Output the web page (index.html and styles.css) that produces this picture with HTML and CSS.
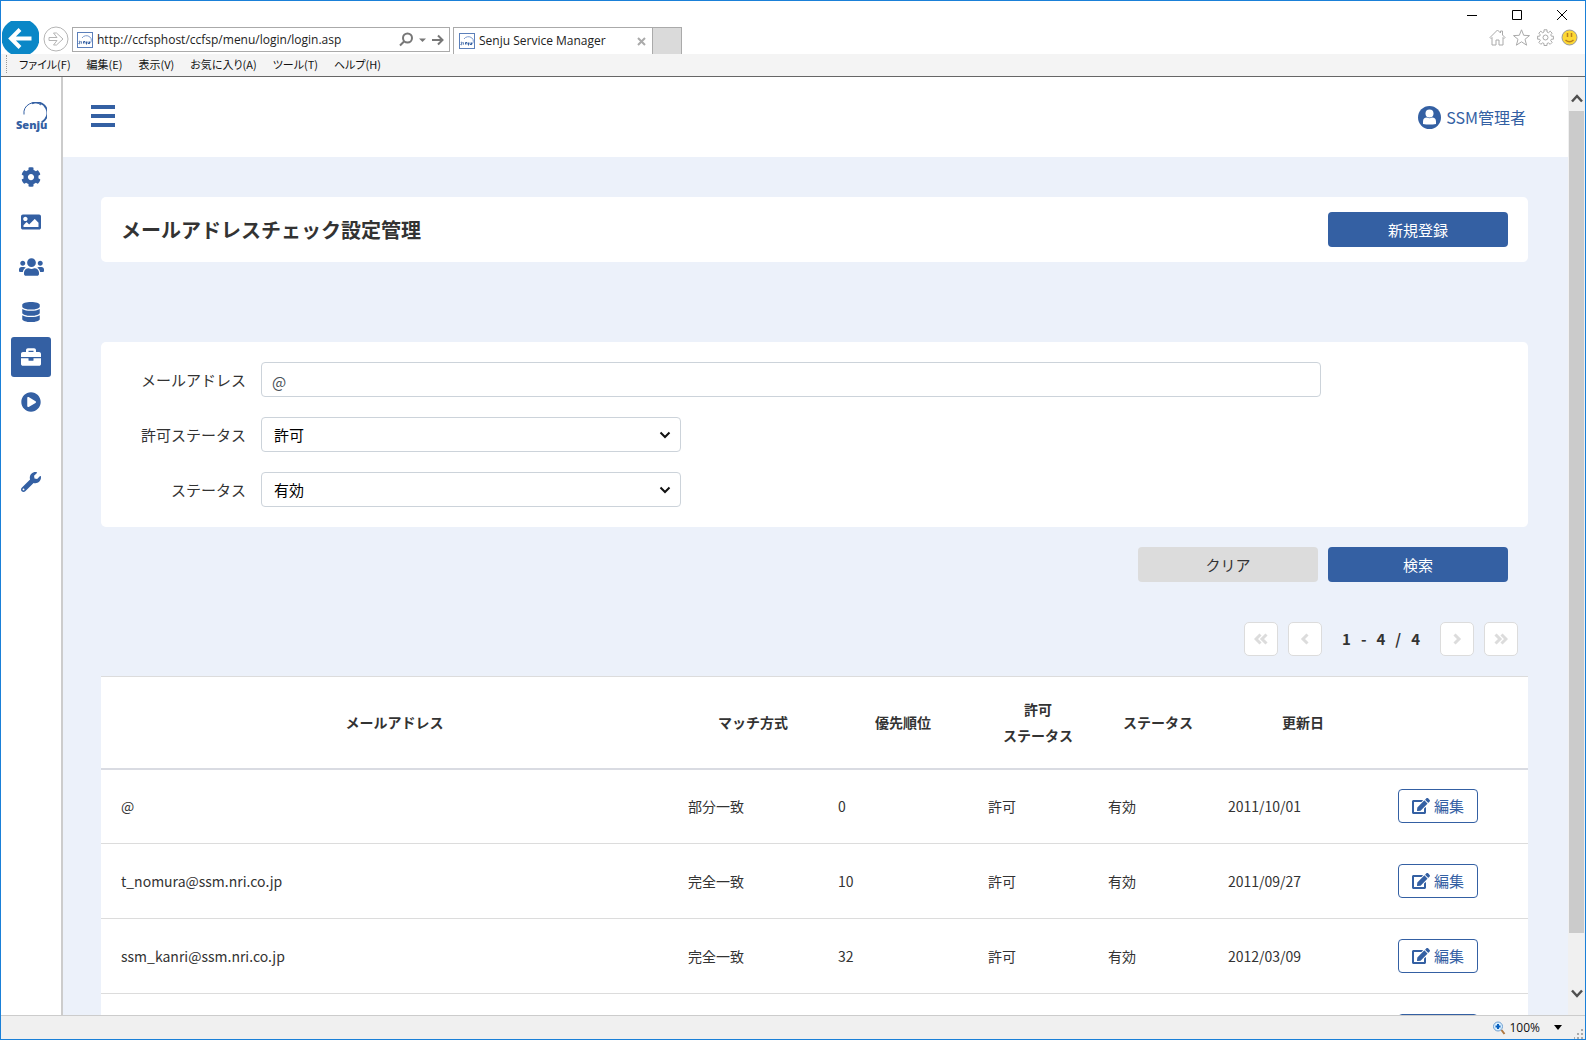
FILE: index.html
```html
<!DOCTYPE html>
<html lang="ja">
<head>
<meta charset="utf-8">
<title>Senju Service Manager</title>
<link rel="stylesheet" href="styles.css">
</head>
<body>
<svg class="sprite" aria-hidden="true">
  <symbol id="edit" viewBox="0 0 576 512"><path d="M402.6 83.2l90.2 90.2c3.8 3.8 3.8 10 0 13.8L274.4 405.6l-92.8 10.3c-12.4 1.4-22.9-9.1-21.5-21.5l10.3-92.8L388.8 83.2c3.8-3.8 10-3.8 13.8 0zm162-22.9l-48.8-48.8c-15.2-15.2-39.9-15.2-55.2 0l-35.4 35.4c-3.8 3.8-3.8 10 0 13.8l90.2 90.2c3.8 3.8 10 3.8 13.8 0l35.4-35.4c15.2-15.3 15.2-40 0-55.2zM384 346.2V448H64V128h229.8c3.2 0 6.2-1.3 8.5-3.5l40-40c7.6-7.6 2.2-20.5-8.5-20.5H48C21.5 64 0 85.5 0 112v352c0 26.5 21.5 48 48 48h352c26.5 0 48-21.5 48-48V306.2c0-10.7-12.9-16-20.5-8.5l-40 40c-2.2 2.3-3.5 5.3-3.5 8.5z"/></symbol>
  <symbol id="down" viewBox="0 0 12 8"><path d="M1.5 1.5L6 6l4.500-4.500" fill="none" stroke="currentColor" stroke-width="2"/></symbol>
  <symbol id="favicon" viewBox="0 0 16 16"><rect x=".5" y=".5" width="15" height="15" fill="#fff" stroke="#5b7fba"/><path d="M5 6a5 4.500 0 1 1 7 6" fill="none" stroke="#7d9bce"/><path d="M1.500 11.500c1 .8 2-.2 1-1s0-1.800 1-1M5 11.500c-1 0-1-2 0-2M6.500 11.500v-2h1.500v2M9.500 9.500v3M11 9.500v2h1.500v-2" fill="none" stroke="#3460a3"/></symbol>
</svg>

<div class="window">
  <header class="chrome">
    <div class="navigation">
      <button class="bare" aria-label="戻る"><svg width="37" height="34" viewBox="0 0 37 34"><path d="M9 1a19 19 0 0 0 0 33h19a19 19 0 0 0 0-33z" fill="#0a87c7"/><path d="M9.500 18.500h20M18 9.500l-9 9 9 9" fill="none" stroke="#fff" stroke-width="4"/></svg></button>
      <button class="bare" aria-label="進む"><svg width="26" height="26" viewBox="0 0 26 26" fill="none" stroke="#b5b5b5"><circle cx="13" cy="13" r="12"/><path d="M6 11.500h8l-3.500-4.500h3l6.500 6-6.500 6h-3l3.500-4.500H6z"/></svg></button>
      <div class="address">
        <svg width="16" height="16"><use href="#favicon"/></svg>
        <input class="url" aria-label="アドレス" value="http://ccfsphost/ccfsp/menu/login/login.asp">
        <svg width="46" height="16" viewBox="0 0 46 16" fill="none" stroke="#777" stroke-width="2"><circle cx="8.500" cy="6" r="4.500"/><path d="M5 9.500l-4 4M33 8h10M39 3.500L43.500 8 39 12.500"/><path d="M20 6.500h7l-3.500 3.500z" fill="#777" stroke="none"/></svg>
      </div>
      <div class="tab">
        <svg width="16" height="16"><use href="#favicon"/></svg>
        <span class="tab-name">Senju Service Manager</span>
        <button class="bare" aria-label="タブを閉じる"><svg width="9" height="9" viewBox="0 0 9 9"><path d="M1 1l7 7M8 1L1 8" stroke="#aaa" stroke-width="2"/></svg></button>
      </div>
      <button class="new-tab" aria-label="新しいタブ"></button>
      <div class="corner">
        <div class="controls">
          <svg width="12" height="12" viewBox="0 0 12 12"><path d="M1 6.500h10" stroke="#000"/></svg>
          <svg width="12" height="12" viewBox="0 0 12 12"><path d="M1.500 1.500h9v9h-9z" fill="none" stroke="#000"/></svg>
          <svg width="12" height="12" viewBox="0 0 12 12"><path d="M1 1l10 10M11 1L1 11" stroke="#000"/></svg>
        </div>
        <div class="tools">
          <svg width="17" height="17" viewBox="0 0 17 17" fill="none" stroke="#aaa"><path d="M1 8.500l7.500-7.500 3 3V2h2v4L16 8.500l-1 1-1-1V16h-4v-5H7v5H3V8.500l-1 1z"/></svg>
          <svg width="17" height="17" viewBox="0 0 17 17" fill="none" stroke="#aaa"><path d="M8.500.8l2.200 5.500 5.800.3-4.500 3.700 1.600 5.900-5.100-3.400-5.100 3.400L5 10.300.5 6.600l5.800-.3z"/></svg>
          <svg width="17" height="17" viewBox="0 0 17 17" fill="none" stroke="#aaa"><circle cx="8.500" cy="8.500" r="2.500"/><path d="M7 .8h3v2.200l1.500.7 1.700-1.500 2 2-1.500 1.700.7 1.300h2v3h-2l-.7 1.500 1.500 1.600-2 2-1.700-1.400-1.500.6v2H7v-2l-1.500-.6-1.700 1.400-2-2 1.500-1.600-.7-1.500h-2v-3h2l.7-1.300-1.500-1.700 2-2 1.700 1.500L7 3z"/></svg>
          <svg width="17" height="17" viewBox="0 0 17 17"><circle cx="8.500" cy="8.500" r="7.500" fill="#fdd835" stroke="#999"/><path d="M6.500 4v4M10.500 4v4M4.500 11q4 3.500 8 0" fill="none" stroke="#b8801c" stroke-width="1.500"/></svg>
        </div>
      </div>
    </div>
    <nav class="menubar">
      <span class="handle"></span>
      <span>ファイル(F)</span><span>編集(E)</span><span>表示(V)</span><span>お気に入り(A)</span><span>ツール(T)</span><span>ヘルプ(H)</span>
    </nav>
  </header>

  <div class="viewport">
    <nav class="sidebar">
      <div class="logo">
        <svg width="24" height="24" viewBox="0 0 24 24" aria-hidden="true"><path d="M1 12.500A10.500 10.500 0 0 1 18 3" fill="none" stroke="#3460a3"/><path d="M9 1.500A10.500 10.500 0 0 1 18.500 20.500" fill="none" stroke="#3460a3" stroke-width="1.800"/></svg>
        <span class="logo-name">Senju</span>
      </div>
      <a class="item" href="#" aria-label="設定"><svg width="20" height="20" viewBox="0 0 512 512"><path d="M487.400 315.700l-42.600-24.600c4.300-23.200 4.300-47 0-70.200l42.600-24.600c4.900-2.800 7.100-8.600 5.500-14-11.100-35.600-30-67.800-54.700-94.600-3.800-4.100-10-5.100-14.800-2.300L380.800 110c-17.900-15.400-38.500-27.300-60.800-35.100V25.800c0-5.600-3.900-10.500-9.400-11.700-36.700-8.200-74.300-7.800-109.200 0-5.500 1.200-9.400 6.100-9.400 11.700V75c-22.200 7.900-42.800 19.800-60.800 35.100L88.700 85.500c-4.900-2.800-11-1.900-14.800 2.300-24.700 26.700-43.600 58.900-54.700 94.600-1.700 5.400.6 11.200 5.500 14L67.300 221c-4.300 23.200-4.300 47 0 70.200l-42.600 24.600c-4.900 2.800-7.100 8.600-5.500 14 11.100 35.600 30 67.800 54.700 94.600 3.800 4.100 10 5.100 14.800 2.300l42.600-24.600c17.900 15.400 38.500 27.300 60.800 35.100v49.200c0 5.600 3.900 10.500 9.400 11.700 36.700 8.200 74.300 7.800 109.200 0 5.500-1.200 9.400-6.100 9.400-11.700v-49.200c22.200-7.900 42.800-19.800 60.800-35.100l42.600 24.600c4.900 2.800 11 1.900 14.800-2.300 24.700-26.700 43.600-58.900 54.700-94.600 1.500-5.500-.7-11.300-5.600-14.100zM256 336c-44.100 0-80-35.900-80-80s35.900-80 80-80 80 35.900 80 80-35.900 80-80 80z"/></svg></a>
      <a class="item" href="#" aria-label="画像"><svg width="20" height="20" viewBox="0 0 512 512"><path d="M464 448H48c-26.510 0-48-21.490-48-48V112c0-26.510 21.490-48 48-48h416c26.510 0 48 21.490 48 48v288c0 26.510-21.490 48-48 48zM112 120c-30.928 0-56 25.072-56 56s25.072 56 56 56 56-25.072 56-56-25.072-56-56-56zM64 384h384V272l-87.515-87.515c-4.686-4.686-12.284-4.686-16.971 0L208 320l-55.515-55.515c-4.686-4.686-12.284-4.686-16.971 0L64 336v48z"/></svg></a>
      <a class="item" href="#" aria-label="ユーザー"><svg width="25" height="20" viewBox="0 0 640 512"><path d="M96 224c35.300 0 64-28.700 64-64s-28.700-64-64-64-64 28.700-64 64 28.700 64 64 64zm448 0c35.300 0 64-28.700 64-64s-28.700-64-64-64-64 28.700-64 64 28.700 64 64 64zm32 32h-64c-17.600 0-33.500 7.100-45.100 18.600 40.300 22.100 68.900 62 75.100 109.400h66c17.700 0 32-14.300 32-32v-32c0-35.300-28.700-64-64-64zm-256 0c61.900 0 112-50.100 112-112S381.900 32 320 32 208 82.100 208 144s50.100 112 112 112zm76.800 32h-8.300c-20.800 10-43.900 16-68.500 16s-47.600-6-68.500-16h-8.300C179.600 288 128 339.600 128 403.200V432c0 26.500 21.500 48 48 48h288c26.500 0 48-21.500 48-48v-28.800c0-63.600-51.600-115.200-115.200-115.200zm-223.700-13.400C161.500 263.100 145.600 256 128 256H64c-35.300 0-64 28.700-64 64v32c0 17.700 14.300 32 32 32h65.900c6.300-47.400 34.900-87.300 75.200-109.400z"/></svg></a>
      <a class="item" href="#" aria-label="データベース"><svg width="18" height="20" viewBox="0 0 448 512"><path d="M448 73.143v45.714C448 159.143 347.667 192 224 192S0 159.143 0 118.857V73.143C0 32.857 100.333 0 224 0s224 32.857 224 73.143zM448 176v102.857C448 319.143 347.667 352 224 352S0 319.143 0 278.857V176c48.125 33.143 136.208 48.572 224 48.572S399.874 209.143 448 176zm0 160v102.857C448 479.143 347.667 512 224 512S0 479.143 0 438.857V336c48.125 33.143 136.208 48.572 224 48.572S399.874 369.143 448 336z"/></svg></a>
      <a class="item active" href="#" aria-label="業務"><svg width="20" height="20" viewBox="0 0 512 512"><path d="M320 336c0 8.840-7.160 16-16 16h-96c-8.840 0-16-7.160-16-16v-48H0v144c0 25.600 22.400 48 48 48h416c25.600 0 48-22.400 48-48V288H320v48zm144-208h-80V80c0-25.600-22.400-48-48-48H176c-25.600 0-48 22.400-48 48v48H48c-25.600 0-48 22.400-48 48v80h512v-80c0-25.600-22.400-48-48-48zm-144 0H192V96h128v32z"/></svg></a>
      <a class="item" href="#" aria-label="実行"><svg width="20" height="20" viewBox="0 0 512 512"><path d="M256 8C119 8 8 119 8 256s111 248 248 248 248-111 248-248S393 8 256 8zm115.700 272l-176 101c-15.800 8.800-35.700-2.500-35.700-21V152c0-18.400 19.800-29.800 35.700-21l176 107c16.400 9.200 16.400 32.900 0 42z"/></svg></a>
      <a class="item apart" href="#" aria-label="ツール"><svg width="20" height="20" viewBox="0 0 512 512"><path d="M507.730 109.100c-2.240-9.030-13.540-12.090-20.120-5.510l-74.360 74.360-67.880-11.310-11.310-67.880 74.360-74.360c6.620-6.620 3.430-17.900-5.660-20.160-47.380-11.740-99.550.91-136.580 37.930-39.640 39.640-50.550 97.100-34.050 147.200L18.740 402.760c-24.990 24.990-24.990 65.510 0 90.500 24.990 24.990 65.510 24.990 90.500 0l213.210-213.210c50.120 16.710 107.470 5.680 147.370-34.220 37.070-37.070 49.700-89.320 37.910-136.730zM64 472c-13.250 0-24-10.750-24-24 0-13.260 10.750-24 24-24s24 10.740 24 24c0 13.250-10.750 24-24 24z"/></svg></a>
    </nav>

    <div class="page">
      <header class="topbar">
        <button class="bare" aria-label="メニュー"><svg width="24" height="22" viewBox="0 0 24 22"><path d="M0 2h24M0 11h24M0 20h24" stroke="#3460a3" stroke-width="4"/></svg></button>
        <a class="user" href="#"><svg width="23" height="23" viewBox="0 0 23 23"><circle cx="11.500" cy="11.500" r="11.500"/><circle cx="11.500" cy="7.500" r="4" fill="#fff"/><path d="M5 18v-2.500q0-4 4-4 2.500 1.500 5 0 4 0 4 4V18q-6.500 1-13 0z" fill="#fff"/></svg>SSM管理者</a>
      </header>
      <main class="content">
        <section class="card heading">
          <h1 class="title">メールアドレスチェック設定管理</h1>
          <button class="button primary">新規登録</button>
        </section>
        <form class="search">
          <div class="card fields">
            <label for="mail">メールアドレス</label>
            <input class="control" id="mail" value="@">
            <label for="permit">許可ステータス</label>
            <div class="picker"><select class="control" id="permit"><option>許可</option></select><svg width="12" height="8"><use href="#down"/></svg></div>
            <label for="status">ステータス</label>
            <div class="picker"><select class="control" id="status"><option>有効</option></select><svg width="12" height="8"><use href="#down"/></svg></div>
          </div>
          <div class="actions">
            <button class="button" type="reset">クリア</button>
            <button class="button primary" type="button">検索</button>
          </div>
        </form>
        <nav class="pager">
          <button class="step" aria-label="最初"><svg width="14" height="12" viewBox="0 0 14 12"><path d="M6.500 1.500L2 6l4.500 4.500M12.500 1.500L8 6l4.500 4.500"/></svg></button>
          <button class="step" aria-label="前へ"><svg width="14" height="12" viewBox="0 0 14 12"><path d="M9.500 1.500L5 6l4.500 4.500"/></svg></button>
          <div class="range"><span>1</span><span>-</span><span>4</span><span>/</span><span>4</span></div>
          <button class="step" aria-label="次へ"><svg width="14" height="12" viewBox="0 0 14 12"><path d="M4.500 1.500L9 6l-4.500 4.500"/></svg></button>
          <button class="step" aria-label="最後"><svg width="14" height="12" viewBox="0 0 14 12"><path d="M1.500 1.500L6 6l-4.500 4.500M7.500 1.500L12 6l-4.500 4.500"/></svg></button>
        </nav>
        <table class="list">
          <colgroup><col><col class="mid"><col class="mid"><col class="narrow"><col class="narrow"><col class="date"><col class="mid"></colgroup>
          <thead>
            <tr><th>メールアドレス</th><th>マッチ方式</th><th>優先順位</th><th>許可<br>ステータス</th><th>ステータス</th><th>更新日</th><th></th></tr>
          </thead>
          <tbody>
            <tr><td>@</td><td>部分一致</td><td>0</td><td>許可</td><td>有効</td><td>2011/10/01</td><td><button class="edit"><svg width="18" height="16"><use href="#edit"/></svg>編集</button></td></tr>
            <tr><td>t_nomura@ssm.nri.co.jp</td><td>完全一致</td><td>10</td><td>許可</td><td>有効</td><td>2011/09/27</td><td><button class="edit"><svg width="18" height="16"><use href="#edit"/></svg>編集</button></td></tr>
            <tr><td>ssm_kanri@ssm.nri.co.jp</td><td>完全一致</td><td>32</td><td>許可</td><td>有効</td><td>2012/03/09</td><td><button class="edit"><svg width="18" height="16"><use href="#edit"/></svg>編集</button></td></tr>
            <tr><td></td><td></td><td></td><td></td><td></td><td></td><td><button class="edit" aria-label="編集"></button></td></tr>
          </tbody>
        </table>
      </main>
    </div>

    <div class="scrollbar" aria-hidden="true">
      <svg class="arrow" width="12" height="9" viewBox="0 0 12 9"><path d="M1 7.500L6 2l5 5.500" fill="none" stroke="#505050" stroke-width="2.500"/></svg>
      <div class="thumb"></div>
      <svg class="arrow" width="12" height="9" viewBox="0 0 12 9"><path d="M1 1.500L6 7l5-5.500" fill="none" stroke="#505050" stroke-width="2.500"/></svg>
    </div>
  </div>

  <footer class="statusbar">
    <svg width="14" height="14" viewBox="0 0 14 14"><circle cx="6" cy="5.500" r="4.500" fill="#d9efff" stroke="#6f9fd0"/><path d="M9.500 9l3 4" stroke="#b07840" stroke-width="2"/><path d="M3.500 5.500h5M6 3v5" stroke="#0a62c0" stroke-width="2"/></svg>
    <span class="zoom">100%</span>
    <svg width="8" height="5" viewBox="0 0 8 5"><path d="M0 0h8L4 5z"/></svg>
    <svg class="grip" width="10" height="10" viewBox="0 0 10 10" fill="#aaa"><path d="M7 0h2v2H7zM7 4h2v2H7zM3 4h2v2H3zM7 8h2v2H7zM3 8h2v2H3zM0 8h1v2H0z"/></svg>
  </footer>
</div>
</body>
</html>
```
FILE: styles.css
```css
* { box-sizing: border-box; }

body {
  margin: 0;
  color: #333;
  font: 15px/26px "Noto Sans CJK JP", sans-serif;
}

button, input, select { font: inherit; color: inherit; margin: 0; }
svg { display: block; flex: none; }
.sprite { position: absolute; width: 0; height: 0; }
.bare { padding: 0; border: 0; background: none; }

.window {
  display: flex;
  flex-direction: column;
  height: 100vh;
  border: 1px solid #1a80d8;
  overflow: hidden;
}

/* Browser frame */
.chrome { flex: none; background: #fff; border-bottom: 1px solid #666; }
.navigation {
  display: flex;
  align-items: flex-end;
  height: 53px;
  padding: 0 6px 0 1px;
  font: 12px/18px "Open Sans", sans-serif;
  color: #222;
}
.navigation > .bare { margin: 0 4px 0 0; }
.navigation > .bare + .bare { margin: 0 3px 2px 0; }
.address {
  display: flex;
  align-items: center;
  gap: 4px;
  width: 378px;
  height: 25px;
  margin: 0 3px 2px 0;
  padding: 0 4px;
  border: 1px solid #aaa;
}
.url { flex: 1; min-width: 0; padding: 0; border: 0; background: none; }
.tab {
  display: flex;
  align-items: center;
  gap: 4px;
  width: 200px;
  height: 27px;
  padding: 0 6px 0 5px;
  border: 1px solid #aaa;
  border-bottom: 0;
}
.tab-name { flex: 1; }
.new-tab { width: 29px; height: 27px; padding: 0; border: 1px solid #aaa; border-left: 0; border-bottom: 0; background: #dadada; }
.corner { display: flex; flex-direction: column; gap: 8px; align-items: flex-end; margin-left: auto; padding-bottom: 8px; }
.controls { display: flex; gap: 33px; padding-right: 11px; }
.tools { display: flex; gap: 7px; padding-right: 1px; }
.menubar {
  display: flex;
  align-items: center;
  gap: 16px;
  height: 22px;
  padding: 0 0 2px 5px;
  background: #f4f4f4;
  font: 11px/20px "Noto Sans CJK JP", sans-serif;
  font-feature-settings: "palt";
  color: #111;
}
.handle { height: 18px; margin-right: -4px; border-left: 1px dotted #999; }

/* Application */
.viewport { display: flex; flex: 1; min-height: 0; }
.sidebar {
  display: flex;
  flex-direction: column;
  align-items: center;
  gap: 5px;
  width: 62px;
  flex: none;
  border-right: 2px solid #ccc;
  background: #fff;
}
.logo { position: relative; width: 30px; height: 50px; margin: 25px 0 0; }
.logo svg { margin-left: 7px; }
.logo-name {
  position: absolute;
  top: 15px;
  left: 0;
  font: 800 11px/16px "Open Sans", sans-serif;
  color: #3460a3;
}
.item { display: grid; place-items: center; width: 40px; height: 40px; border-radius: 3px; fill: #3460a3; }
.item.active { background: #3460a3; fill: #fff; }
.item.apart { margin-top: 35px; }
.page { flex: 1; min-width: 0; overflow: hidden; background: #ecf1fa; }
.topbar {
  display: flex;
  align-items: center;
  justify-content: space-between;
  height: 80px;
  padding: 0 42px 2px 28px;
  background: #fff;
}
.user { display: flex; align-items: center; gap: 5px; padding-top: 2px; color: #3460a3; fill: #3460a3; font-size: 16px; text-decoration: none; }
.content { padding: 40px 40px 0 38px; }
.card { background: #fff; border-radius: 5px; }
.heading { display: flex; align-items: center; justify-content: space-between; padding: 15px 20px; margin-bottom: 80px; }
.title { margin: 0; font-size: 20px; line-height: 30px; }
.button { width: 180px; height: 35px; padding: 0; border: 0; border-radius: 4px; background: #dcdcdc; }
.button.primary { background: #3460a3; color: #fff; }
.fields {
  display: grid;
  grid-template-columns: 125px 1fr;
  gap: 20px 15px;
  align-items: center;
  padding: 20px 207px 20px 20px;
}
.fields label { text-align: right; }
.control { width: 100%; height: 35px; border: 1px solid #ccd3da; border-radius: 4px; background: #fff; }
input.control { padding: 4px 10px 0; color: #495057; }
.picker { display: grid; align-items: center; width: 420px; }
.picker > * { grid-area: 1 / 1; }
.picker svg { justify-self: end; margin-right: 10px; color: #111; pointer-events: none; }
select.control { appearance: none; padding: 0 12px; color: #000; }
.actions { display: flex; justify-content: flex-end; gap: 10px; padding: 20px 20px 40px; }
.pager { display: flex; justify-content: flex-end; align-items: center; gap: 10px; padding: 0 10px 20px; }
.step { display: grid; place-items: center; width: 34px; height: 34px; padding: 0; border: 1px solid #dcdcdc; border-radius: 5px; background: #fff; }
.step svg { fill: none; stroke: #dcdcdc; stroke-width: 3; }
.range { display: flex; gap: 10px; padding: 0 10px; font-weight: 700; }

.list { width: 100%; table-layout: fixed; border-collapse: collapse; background: #fff; font-size: 14px; }
.mid { width: 150px; }
.narrow { width: 120px; }
.date { width: 170px; }
.list th { height: 92px; padding: 0 0 0 20px; border-top: 1px solid #dcdcdc; border-bottom: 2px solid #d9dbe2; }
.list td { height: 75px; padding: 0 0 0 20px; border-bottom: 1px solid #dcdcdc; }
.edit {
  display: flex;
  align-items: center;
  justify-content: center;
  gap: 4px;
  width: 80px;
  height: 34px;
  padding: 0;
  border: 1px solid #3460a3;
  border-radius: 4px;
  background: #fff;
  color: #3460a3;
  fill: #3460a3;
  font-size: 15px;
}

.scrollbar { display: flex; flex-direction: column; align-items: center; flex: none; width: 17px; padding: 17px 0; background: #f0f0f0; }
.thumb { width: 15px; height: 822px; margin: 8px 0 auto; background: #cbcbcb; }

.statusbar {
  display: flex;
  align-items: center;
  justify-content: flex-end;
  flex: none;
  height: 24px;
  padding-right: 1px;
  border-top: 1px solid #ccc;
  background: #f0f0f0;
  font: 12px/20px "Open Sans", sans-serif;
  color: #111;
}
.zoom { margin: 0 14px 0 3px; }
.grip { align-self: flex-end; margin-left: 12px; }
```
